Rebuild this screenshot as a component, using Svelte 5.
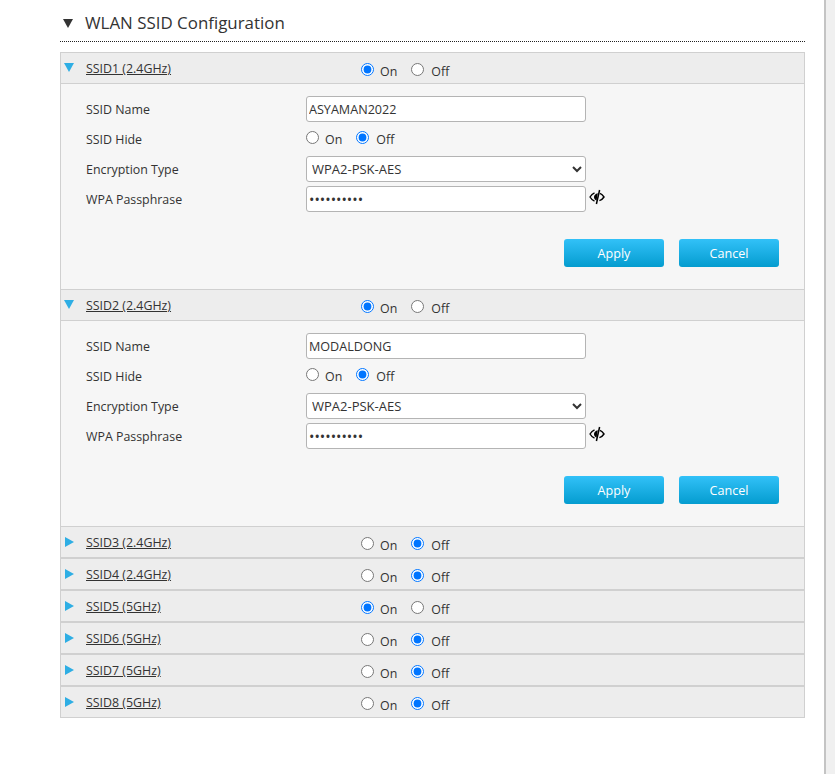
<script>
	const ssids = [
		{ id: 1, band: '2.4GHz', on: true, open: true, name: 'ASYAMAN2022' },
		{ id: 2, band: '2.4GHz', on: true, open: true, name: 'MODALDONG' },
		{ id: 3, band: '2.4GHz', on: false, open: false },
		{ id: 4, band: '2.4GHz', on: false, open: false },
		{ id: 5, band: '5GHz', on: true, open: false },
		{ id: 6, band: '5GHz', on: false, open: false },
		{ id: 7, band: '5GHz', on: false, open: false },
		{ id: 8, band: '5GHz', on: false, open: false }
	];
</script>

<div class="page">
	<main class="content">
		<h2 class="title"><span class="title-arrow"></span>WLAN SSID Configuration</h2>

		<div class="panel">
			{#each ssids as s (s.id)}
				<section class="ssid" class:open={s.open}>
					<div class="head">
						<span class="arrow"></span>
						<a class="link" href="#ssid{s.id}">SSID{s.id} ({s.band})</a>
						<div class="radios head-radios">
							<label><input type="radio" name="en{s.id}" checked={s.on} /><span>On</span></label>
							<label><input type="radio" name="en{s.id}" checked={!s.on} /><span>Off</span></label>
						</div>
					</div>
					{#if s.open}
						<div class="body">
							<div class="row">
								<span class="label">SSID Name</span>
								<input class="field" type="text" value={s.name} />
							</div>
							<div class="row">
								<span class="label">SSID Hide</span>
								<div class="radios">
									<label><input type="radio" name="hide{s.id}" /><span>On</span></label>
									<label><input type="radio" name="hide{s.id}" checked /><span>Off</span></label>
								</div>
							</div>
							<div class="row">
								<span class="label">Encryption Type</span>
								<select class="field select">
									<option>WPA2-PSK-AES</option>
								</select>
							</div>
							<div class="row">
								<span class="label">WPA Passphrase</span>
								<input class="field pass" type="password" value="1234567890" />
								<svg class="eye" width="16" height="16" viewBox="0 0 16 16" aria-hidden="true">
									<path d="M5.5 3.8 C3.6 4.6 2.2 6 1 8 C2.2 10 3.6 11.4 5.5 12.2" fill="none" stroke="#000" stroke-width="1.4" />
									<path d="M5 8 C5 6.2 6.4 4.8 8.8 4.2 L7.6 11.6 C6 11.2 5 9.8 5 8Z" fill="#000" />
									<path d="M10.6 1 L7.4 15" stroke="#000" stroke-width="1.5" />
									<path d="M11 4.4 C12.7 5.2 13.9 6.4 15 8 C13.9 9.7 12.4 11 10.4 11.7" fill="none" stroke="#000" stroke-width="1.4" />
								</svg>
							</div>
							<div class="actions">
								<button type="button" class="btn">Apply</button>
								<button type="button" class="btn">Cancel</button>
							</div>
						</div>
					{/if}
				</section>
			{/each}
		</div>
	</main>
	<div class="scroll-track"></div>
</div>

<style>
	:global(body) {
		margin: 0;
		background: #fff;
	}

	.page {
		display: flex;
		height: 774px;
		overflow: hidden;
		font-family: "Open Sans", "Liberation Sans", sans-serif;
		font-size: 12.4px;
		color: #333;
	}

	.content {
		width: 745px;
		margin-left: 60px;
	}

	.scroll-track {
		width: 9px;
		margin-left: 19px;
		border-left: 2px solid #c4c4c4;
		background: #f0f0f0;
	}

	.title {
		display: flex;
		align-items: center;
		height: 42px;
		margin: 0 0 10px;
		padding-top: 4px;
		font-size: 16.9px;
		font-weight: 400;
		color: #333;
		border-bottom: 1px dotted #222;
		box-sizing: border-box;
	}

	.title-arrow {
		width: 0;
		height: 0;
		margin: 2px 12px 0 3px;
		border-left: 5.5px solid transparent;
		border-right: 5.5px solid transparent;
		border-top: 9px solid #333;
	}

	.panel {
		border: 1px solid #d0d0d0;
		box-sizing: border-box;
		width: 745px;
		background: #ededed;
	}

	.ssid + .ssid {
		border-top: 2px solid #d0d0d0;
	}

	.ssid.open + .ssid {
		border-top-width: 1px;
	}

	.head {
		display: flex;
		align-items: center;
		height: 30px;
		background: #ededed;
	}

	.arrow {
		width: 0;
		height: 0;
		margin: 0 0 0 4px;
		border-top: 5px solid transparent;
		border-bottom: 5px solid transparent;
		border-left: 9px solid #2eaee4;
	}

	.open .arrow {
		margin: -1px 0 0 3px;
		border-left: 5px solid transparent;
		border-right: 5px solid transparent;
		border-top: 9px solid #2eaee4;
		border-bottom: 0;
	}

	.link {
		width: 275px;
		margin-left: 12px;
		color: #333;
		text-decoration: underline;
		margin-top: 1px;
	}

	.radios {
		display: flex;
		gap: 14px;
	}

	.radios label {
		display: flex;
		align-items: center;
	}

	.radios input {
		margin: 0 6px 0 0;
		width: 13px;
		height: 13px;
		position: relative;
		top: -2px;
	}

	.radios label + label input {
		margin-right: 7px;
	}

	.head-radios {
		margin-top: 7px;
	}

	.body {
		height: 206px;
		padding: 10px 0 0 25px;
		box-sizing: border-box;
		background: #f6f6f6;
		border-top: 1px solid #d0d0d0;
	}

	.row {
		display: flex;
		align-items: center;
		height: 30px;
	}

	.label {
		width: 220px;
		flex: none;
	}

	.field {
		width: 280px;
		height: 26px;
		padding: 0 2px;
		box-sizing: border-box;
		font: inherit;
		font-size: 12.6px;
		color: #333;
		background: #fff;
		border: 1px solid #b4b4b4;
		border-radius: 3px;
		outline: none;
	}

	.select {
		padding-left: 1px;
		font-size: 13px;
	}

	.pass {
		font-size: 14.4px;
	}

	.eye {
		margin: -5px 0 0 3px;
	}

	.actions {
		display: flex;
		justify-content: flex-end;
		gap: 15px;
		margin: 25px 25px 0 0;
	}

	.btn {
		width: 100px;
		height: 28px;
		padding: 0;
		font: inherit;
		font-size: 12.6px;
		color: #fff;
		background: linear-gradient(#32c1f8, #049ccf);
		border: 0;
		border-radius: 3px;
	}
</style>
